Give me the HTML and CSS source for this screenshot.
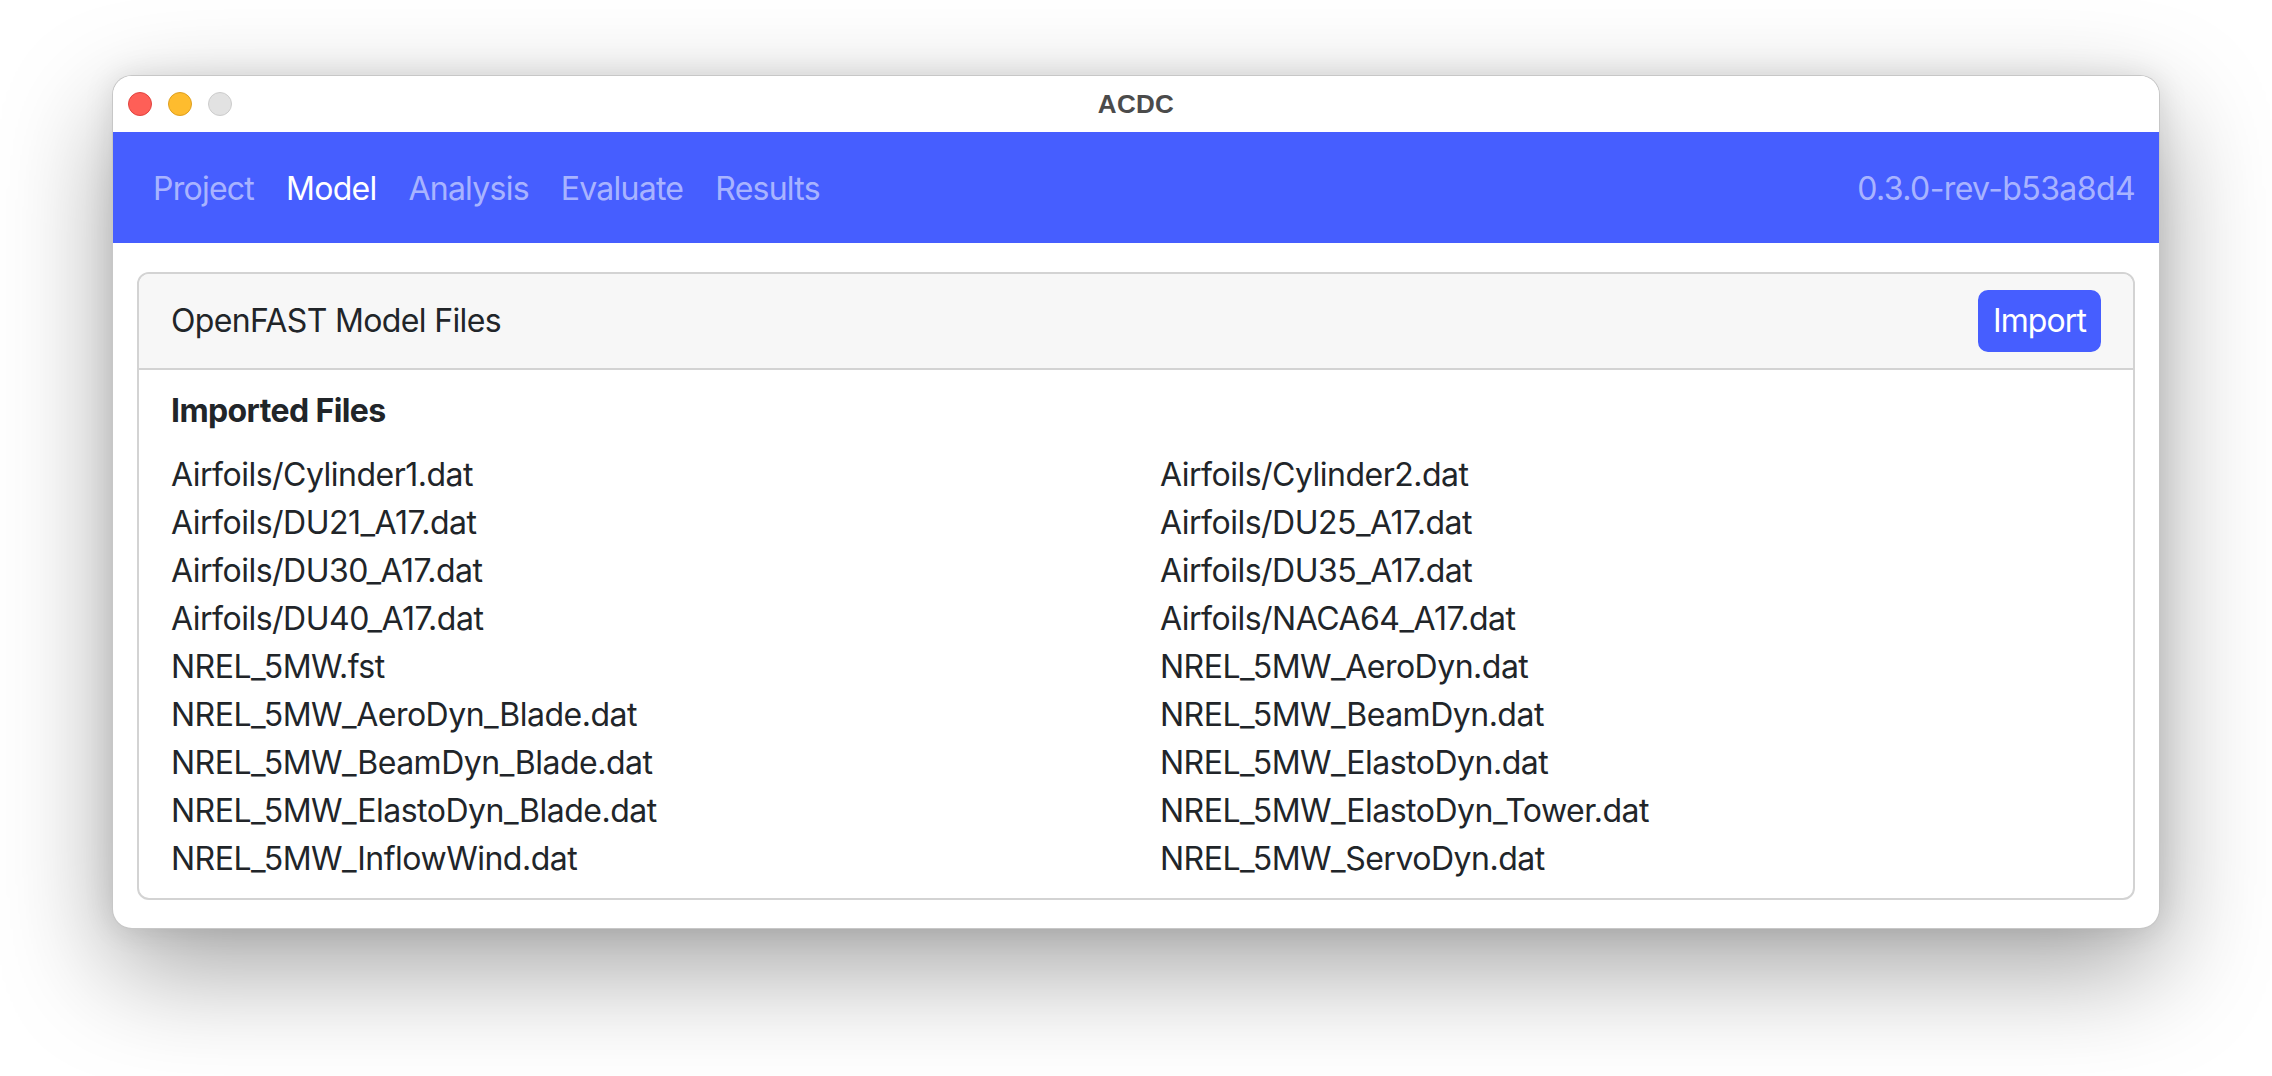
FILE: index.html
```html
<!DOCTYPE html>
<html lang="en">
<head>
<meta charset="utf-8">
<title>ACDC</title>
<link rel="stylesheet" href="styles.css">
</head>
<body>
<div class="window">
  <div class="titlebar">
    <div class="lights">
      <span class="light red"></span>
      <span class="light yellow"></span>
      <span class="light gray"></span>
    </div>
    <div class="title">ACDC</div>
  </div>
  <nav class="navbar">
    <ul class="nav">
      <li class="nav-link">Project</li>
      <li class="nav-link active">Model</li>
      <li class="nav-link">Analysis</li>
      <li class="nav-link">Evaluate</li>
      <li class="nav-link">Results</li>
    </ul>
    <span class="version">0.3.0-rev-b53a8d4</span>
  </nav>
  <main class="content">
    <section class="card">
      <header class="card-header">
        <span class="card-title">OpenFAST Model Files</span>
        <button class="btn">Import</button>
      </header>
      <div class="card-body">
        <p class="section-title">Imported Files</p>
        <ul class="files">
          <li>Airfoils/Cylinder1.dat</li>
          <li>Airfoils/Cylinder2.dat</li>
          <li>Airfoils/DU21_A17.dat</li>
          <li>Airfoils/DU25_A17.dat</li>
          <li>Airfoils/DU30_A17.dat</li>
          <li>Airfoils/DU35_A17.dat</li>
          <li>Airfoils/DU40_A17.dat</li>
          <li>Airfoils/NACA64_A17.dat</li>
          <li>NREL_5MW.fst</li>
          <li>NREL_5MW_AeroDyn.dat</li>
          <li>NREL_5MW_AeroDyn_Blade.dat</li>
          <li>NREL_5MW_BeamDyn.dat</li>
          <li>NREL_5MW_BeamDyn_Blade.dat</li>
          <li>NREL_5MW_ElastoDyn.dat</li>
          <li>NREL_5MW_ElastoDyn_Blade.dat</li>
          <li>NREL_5MW_ElastoDyn_Tower.dat</li>
          <li>NREL_5MW_InflowWind.dat</li>
          <li>NREL_5MW_ServoDyn.dat</li>
        </ul>
      </div>
    </section>
  </main>
</div>
</body>
</html>
```

FILE: styles.css
```css
* { box-sizing: border-box; }

html, body {
  margin: 0;
  padding: 0;
  background: #ffffff;
}

body {
  min-height: 1076px;
  padding-top: 75px;
  font-family: Inter, "Noto Sans", "Liberation Sans", sans-serif;
  color: #212529;
}

.window {
  margin: 0 0 0 112px;
  width: 2048px;
  background: #ffffff;
  border: 1px solid rgba(0, 0, 0, 0.22);
  border-radius: 20px;
  overflow: hidden;
  box-shadow: 0 40px 110px rgba(0, 0, 0, 0.36), 0 0 30px rgba(0, 0, 0, 0.1);
}

.titlebar {
  position: relative;
  height: 56px;
  display: flex;
  align-items: center;
  justify-content: center;
  background: #ffffff;
}

.lights {
  position: absolute;
  left: 15px;
  top: 16px;
  display: flex;
  gap: 16px;
}

.light {
  width: 24px;
  height: 24px;
  border-radius: 50%;
  border: 1px solid transparent;
}

.light.red { background: #fe5f57; border-color: #e1433f; }
.light.yellow { background: #febc2e; border-color: #de9f1f; }
.light.gray { background: #e2e2e2; border-color: #cccccc; }

.title {
  font-family: "Liberation Sans", Arial, sans-serif;
  font-weight: 700;
  font-size: 26px;
  color: #4b4b4b;
  letter-spacing: 0.3px;
}

.navbar {
  height: 111px;
  background: #465eff;
  display: flex;
  align-items: center;
  justify-content: space-between;
  padding: 2px 24px 0;
  font-size: 32px;
  line-height: 48px;
}

.nav {
  list-style: none;
  margin: 0;
  padding: 0;
  display: flex;
}

.nav-link {
  padding: 16px;
  color: rgba(255, 255, 255, 0.55);
  letter-spacing: -0.75px;
}

.nav-link.active {
  color: #ffffff;
}

.version {
  color: rgba(255, 255, 255, 0.55);
  letter-spacing: -0.6px;
}

.content {
  padding: 29px 24px 28px;
}

.card {
  border: 2px solid #d3d3d3;
  border-radius: 12px;
  overflow: hidden;
  font-size: 32px;
  line-height: 48px;
}

.card-header {
  display: flex;
  align-items: center;
  justify-content: space-between;
  padding: 16px 32px;
  background: #f7f7f7;
  border-bottom: 2px solid #d3d3d3;
}

.card-title {
  letter-spacing: -0.65px;
}

.btn {
  font-family: inherit;
  font-size: 32px;
  line-height: 48px;
  color: #ffffff;
  background: #465eff;
  border: 2px solid #465eff;
  border-radius: 10px;
  padding: 5px 13px;
  letter-spacing: -0.9px;
}

.card-body {
  padding: 17px 32px 15px;
}

.section-title {
  margin: 0 0 16px;
  font-weight: 700;
  letter-spacing: -0.6px;
}

.files {
  list-style: none;
  margin: 0;
  padding: 0;
  display: grid;
  grid-template-columns: 1fr 1fr;
  column-gap: 48px;
}

.files li {
  letter-spacing: -0.5px;
}
```
